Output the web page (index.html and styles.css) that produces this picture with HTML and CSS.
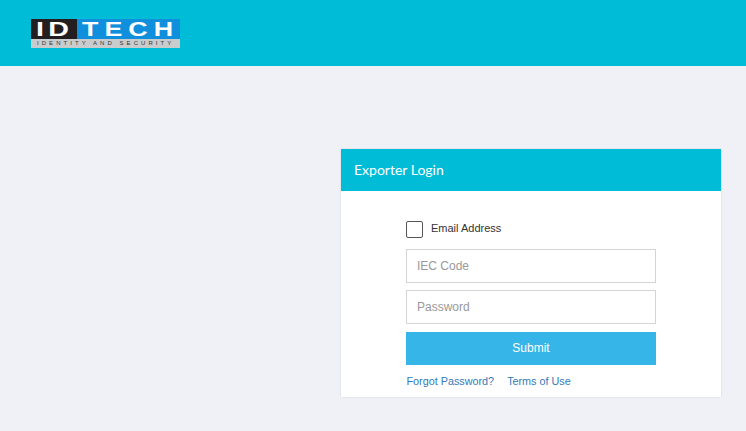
FILE: index.html
```html
<!DOCTYPE html>
<html lang="en">
<head>
    <meta charset="UTF-8">
    <meta name="viewport" content="width=device-width, initial-scale=1.0">
    <title>Exporter Login</title>
    <link rel="stylesheet" href="styles.css">
</head>
<body>
    <header class="topbar">
        <div class="logo">
            <div class="logo-main">
                <div class="logo-id"><span>ID</span></div>
                <div class="logo-tech"><span>TECH</span></div>
            </div>
            <div class="logo-tag">IDENTITY AND SECURITY</div>
        </div>
    </header>
    <main class="content">
        <section class="card">
            <h1 class="card-title">Exporter Login</h1>
            <form class="login-form">
                <label class="check-row">
                    <input type="checkbox" class="check">
                    <span class="check-label">Email Address</span>
                </label>
                <input type="text" class="field" placeholder="IEC Code">
                <input type="password" class="field" placeholder="Password">
                <button type="button" class="submit">Submit</button>
                <div class="links">
                    <a href="#">Forgot Password?</a>
                    <a href="#">Terms of Use</a>
                </div>
            </form>
        </section>
    </main>
</body>
</html>
```

FILE: styles.css
```css
* {
    box-sizing: border-box;
}
html, body {
    height: 100%;
}
body {
    margin: 0;
    background-color: #f0f1f7;
    font-family: "Liberation Sans", Arial, sans-serif;
    color: #333;
    overflow: hidden;
}
.topbar {
    height: 66px;
    padding: 19px 0 0 31px;
    background-color: #00bcd7;
}
.logo {
    width: 149px;
}
.logo-main {
    display: flex;
    height: 20px;
    color: #fff;
    font-size: 20px;
    font-weight: bold;
    line-height: 20px;
    white-space: nowrap;
}
.logo-main span {
    display: inline-block;
    transform-origin: left center;
}
.logo-id {
    width: 46px;
    padding-left: 5px;
    background-color: #231f20;
}
.logo-id span {
    transform: scaleX(1.43);
    letter-spacing: 3px;
}
.logo-tech {
    flex: 1;
    padding-left: 5px;
    background-color: #0f8fdc;
}
.logo-tech span {
    transform: scaleX(1.34);
    letter-spacing: 4.5px;
}
.logo-tag {
    height: 9px;
    padding-left: 6px;
    background-color: #c9cccd;
    color: #333;
    font-size: 6px;
    line-height: 9px;
    letter-spacing: 3.05px;
    white-space: nowrap;
}
.content {
    display: flex;
    justify-content: flex-end;
    padding: 83px 25px 0 0;
}
.card {
    width: 380px;
    height: 248px;
    background-color: #fff;
    box-shadow: 0 0 2px rgba(0, 0, 0, 0.12);
}
.card-title {
    height: 42px;
    margin: 0;
    padding-left: 13px;
    background-color: #00bcd7;
    color: #fff;
    font-family: Lato, sans-serif;
    font-size: 14px;
    font-weight: 400;
    line-height: 41px;
}
.login-form {
    display: flex;
    flex-direction: column;
    width: 250px;
    margin: 30px 0 0 65px;
}
.check-row {
    display: flex;
    align-items: center;
    gap: 8px;
    height: 17px;
    margin-bottom: 11px;
    font-size: 11px;
}
.check-label {
    padding-bottom: 3px;
}
.check {
    appearance: none;
    width: 17px;
    height: 17px;
    margin: 0;
    background-color: #fff;
    border: 1px solid #555;
    border-radius: 2px;
}
.field {
    width: 100%;
    height: 33.5px;
    margin-bottom: 7.5px;
    padding: 0 10px;
    background-color: #fff;
    border: 1px solid #d4d4d4;
    font-family: inherit;
    font-size: 12px;
    outline: none;
}
.field::placeholder {
    color: #999;
    opacity: 1;
}
.submit {
    height: 33px;
    margin-top: 0.5px;
    padding: 0;
    background-color: #35b5e8;
    border: none;
    color: #fff;
    font-family: inherit;
    font-size: 12px;
    cursor: pointer;
}
.links {
    display: flex;
    gap: 13px;
    margin-top: 10px;
    padding-left: 0.5px;
    font-size: 10.8px;
}
.links a {
    color: #337ab7;
    text-decoration: none;
}
```
